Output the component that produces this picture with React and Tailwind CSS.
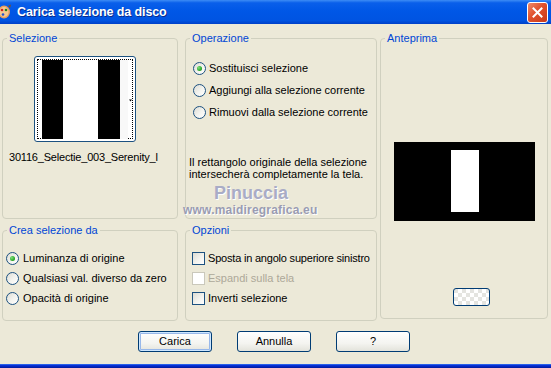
import React from "react";

function Radio({ checked }) {
  return (
    <span className="w-[13px] h-[13px] shrink-0 rounded-full border border-[#1C5180] bg-[linear-gradient(135deg,#DCDCD4_0%,#F4F4F0_55%,#FFFFFF_100%)] flex items-center justify-center">
      {checked && (
        <span className="w-[5px] h-[5px] rounded-full bg-[radial-gradient(circle_at_35%_35%,#7FE07A_0%,#21A121_70%,#1A8E1A_100%)]" />
      )}
    </span>
  );
}

function Check({ disabled }) {
  return (
    <span
      className={
        disabled
          ? "w-[13px] h-[13px] shrink-0 border border-[#CAC8BB] bg-white"
          : "w-[13px] h-[13px] shrink-0 border border-[#1C5180] bg-[linear-gradient(135deg,#DCDCD4_0%,#F2F2EE_55%,#FFFFFF_100%)]"
      }
    />
  );
}

function Group({ title, className, children }) {
  return (
    <fieldset className={"border border-[#D0D0BF] rounded-[4px] " + className}>
      <legend className="ml-[4px] px-[2px] text-[#0046D5] leading-[13px]">{title}</legend>
      {children}
    </fieldset>
  );
}

function XPButton({ children, focus }) {
  return (
    <button
      className={
        "w-[74px] h-[21px] rounded-[3px] border border-[#003C74] bg-[linear-gradient(to_bottom,#FFFFFF_0%,#F4F4F0_60%,#E3E3DB_100%)] text-black leading-[19px] text-center " +
        (focus ? "shadow-[inset_0_0_0_1px_#CEE7FF,inset_0_0_0_2px_#98B8EA]" : "")
      }
    >
      {children}
    </button>
  );
}

export default function App() {
  return (
    <div className="w-[551px] h-[368px] flex flex-col bg-[#ECE9D8] overflow-hidden font-['Liberation_Sans',Arial,sans-serif] text-[11px] text-black">
      {/* Title bar */}
      <div className="h-[24px] shrink-0 flex items-center bg-[linear-gradient(to_bottom,#3D8CF5_0%,#0A5FEA_12%,#0057E6_45%,#0054E2_85%,#0040C8_100%)]">
        <svg width="14" height="16" viewBox="0 0 14 16" className="ml-[-2px] shrink-0">
          <ellipse cx="6" cy="8" rx="6" ry="6.5" fill="#E8A060" />
          <ellipse cx="6" cy="8" rx="4.5" ry="5" fill="#F4C890" />
          <circle cx="4" cy="6" r="1.3" fill="#D02020" />
          <circle cx="8" cy="6" r="1.3" fill="#208020" />
          <circle cx="5" cy="10.5" r="1.3" fill="#2050D0" />
          <path d="M10 2 L13 0.5 L12 4 Z" fill="#805020" />
        </svg>
        <span className="ml-[5px] text-white font-bold text-[12.5px] tracking-[-0.1px] [text-shadow:1px_1px_0_#0A2C8C]">
          Carica selezione da disco
        </span>
        <div className="ml-auto mr-[3px] w-[21px] h-[21px] rounded-[3px] border border-white bg-[linear-gradient(135deg,#F08A6A_0%,#E0502C_45%,#C83A1A_100%)] flex items-center justify-center">
          <svg width="11" height="11" viewBox="0 0 11 11">
            <path d="M1.5 1.5 L9.5 9.5 M9.5 1.5 L1.5 9.5" stroke="white" strokeWidth="2" strokeLinecap="square" />
          </svg>
        </div>
      </div>

      {/* Body */}
      <div className="flex-1 relative pt-[8px] pl-[2px] flex flex-col">
        <div className="flex">
          {/* Left column */}
          <div className="w-[176px] flex flex-col gap-[5px]">
            <Group title="Selezione" className="h-[187px]">
              <div className="mt-[11px] ml-[31px] w-[102px] h-[86px] rounded-[3px] border border-[#1C5180] bg-white p-[2px]">
                <div className="w-full h-full border border-dotted border-black flex items-center relative">
                  <div className="ml-[4px] flex h-[79px]">
                    <div className="w-[21px] bg-black" />
                    <div className="w-[35px] bg-white" />
                    <div className="w-[22px] bg-black" />
                    <div className="w-[8px] bg-[#F8F8F8]" />
                  </div>
                  <svg width="5" height="3" viewBox="0 0 5 3" className="ml-[1px] mt-[2px]">
                    <path d="M0 0 H5 L2.5 3 Z" fill="black" />
                  </svg>
                </div>
              </div>
              <div className="mt-[9px] ml-[6px] whitespace-nowrap leading-[13px] tracking-[-0.2px]">
                30116_Selectie_003_Serenity_l
              </div>
            </Group>
            <Group title="Crea selezione da" className="h-[97px]">
              <div className="mt-[11px] ml-[3px] flex flex-col">
                <label className="h-[20px] flex items-center gap-[4px] whitespace-nowrap"><Radio checked />Luminanza di origine</label>
                <label className="h-[20px] flex items-center gap-[4px] whitespace-nowrap"><Radio />Qualsiasi val. diverso da zero</label>
                <label className="h-[20px] flex items-center gap-[4px] whitespace-nowrap"><Radio />Opacità di origine</label>
              </div>
            </Group>
          </div>

          {/* Middle column */}
          <div className="w-[192px] ml-[7px] flex flex-col gap-[5px]">
            <Group title="Operazione" className="h-[187px]">
              <div className="mt-[12px] ml-[7px] flex flex-col">
                <label className="h-[22px] flex items-center gap-[3px] whitespace-nowrap"><Radio checked />Sostituisci selezione</label>
                <label className="h-[22px] flex items-center gap-[3px] whitespace-nowrap"><Radio />Aggiungi alla selezione corrente</label>
                <label className="h-[22px] flex items-center gap-[3px] whitespace-nowrap"><Radio />Rimuovi dalla selezione corrente</label>
              </div>
              <p className="mt-[33px] ml-[3px] leading-[12px] whitespace-nowrap">
                Il rettangolo originale della selezione
                <br />
                intersecherà completamente la tela.
              </p>
            </Group>
            <Group title="Opzioni" className="h-[97px]">
              <div className="mt-[11px] ml-[6px] flex flex-col">
                <label className="h-[20px] flex items-center gap-[3px] whitespace-nowrap tracking-[-0.2px]"><Check />Sposta in angolo superiore sinistro</label>
                <label className="h-[20px] flex items-center gap-[3px] whitespace-nowrap text-[#ACA899]"><Check disabled />Espandi sulla tela</label>
                <label className="h-[20px] flex items-center gap-[3px] whitespace-nowrap"><Check />Inverti selezione</label>
              </div>
            </Group>
          </div>

          {/* Right column */}
          <Group title="Anteprima" className="w-[168px] ml-[3px] h-[287px]">
            <div className="mt-[97px] mx-auto w-[141px] h-[79px] bg-black pt-[8px] pl-[57px]">
              <div className="w-[28px] h-[62px] bg-white" />
            </div>
            <div className="mt-[67px] ml-[72px] w-[37px] h-[18px] rounded-[3px] border border-[#003C74] bg-[repeating-conic-gradient(#FFFFFF_0%_25%,#E4E4E0_0%_50%)] bg-[length:8px_8px]" />
          </Group>
        </div>

        {/* Buttons */}
        <div className="mt-[10px] ml-[136px] flex gap-[25px]">
          <XPButton focus>Carica</XPButton>
          <XPButton>Annulla</XPButton>
          <XPButton>?</XPButton>
        </div>

        {/* Watermark */}
        <div className="absolute left-[183px] top-[159px] pointer-events-none flex flex-col items-start">
          <span className="ml-[31px] text-[18px] font-bold leading-[20px] text-[#A9ACC6] [text-shadow:1px_1px_0_#FFFFFF]">
            Pinuccia
          </span>
          <span className="text-[12px] font-bold leading-[14px] text-[#9A9CB2] tracking-[0.2px] [text-shadow:1px_1px_0_#FFFFFF]">
            www.maidiregrafica.eu
          </span>
        </div>
      </div>

      {/* Bottom frame */}
      <div className="h-[4px] shrink-0 bg-[linear-gradient(to_bottom,#3A7AF0_0%,#0831D9_35%,#001A9C_100%)]" />
    </div>
  );
}
